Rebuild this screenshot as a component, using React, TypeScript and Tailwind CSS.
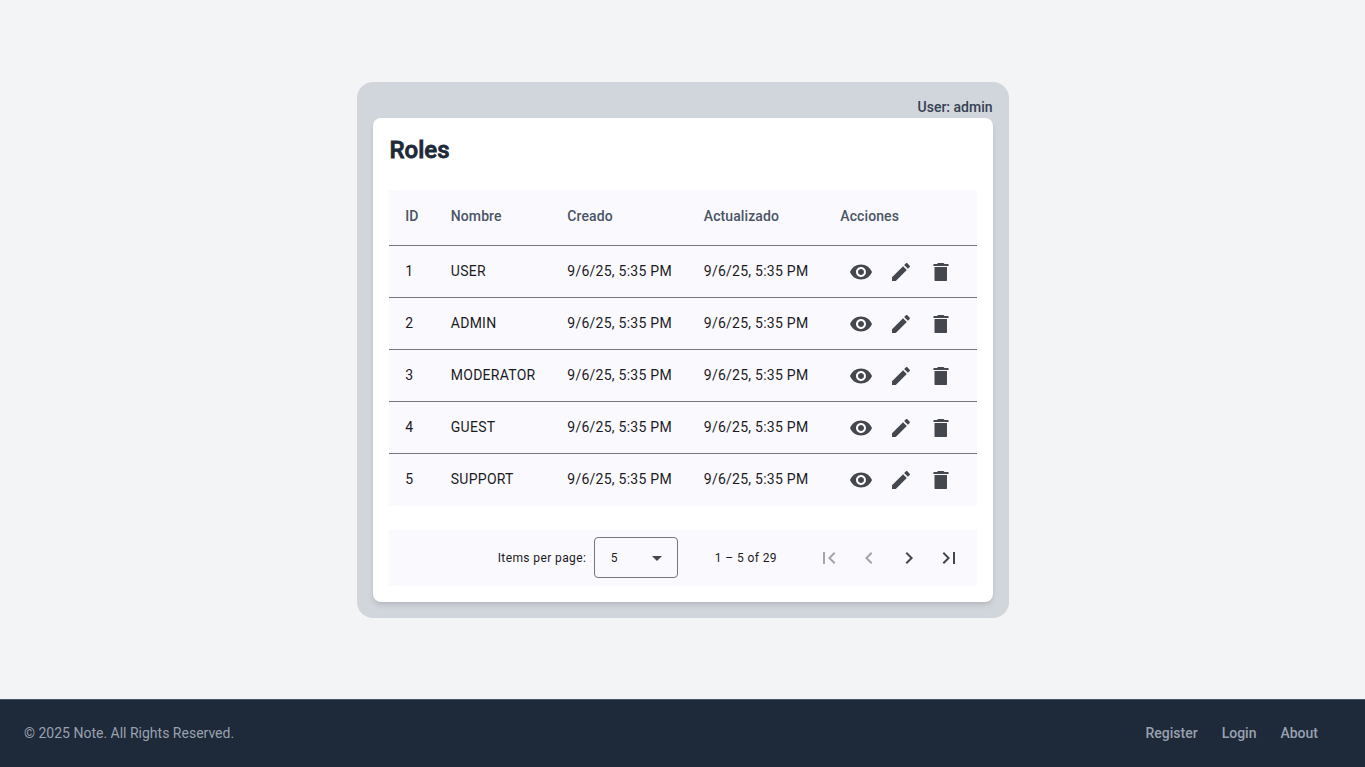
import React from "react";

const ICONS = {
  view: "M12 4.5C7 4.5 2.73 7.61 1 12c1.73 4.39 6 7.5 11 7.5s9.27-3.11 11-7.5c-1.73-4.39-6-7.5-11-7.5zM12 17c-2.76 0-5-2.24-5-5s2.24-5 5-5 5 2.24 5 5-2.24 5-5 5zm0-8c-1.66 0-3 1.34-3 3s1.34 3 3 3 3-1.34 3-3-1.34-3-3-3z",
  edit: "M3 17.25V21h3.75L17.81 9.94l-3.75-3.75L3 17.25zM20.71 7.04c.39-.39.39-1.02 0-1.41l-2.34-2.34c-.39-.39-1.02-.39-1.41 0l-1.83 1.83 3.75 3.75 1.83-1.83z",
  remove: "M5.5 20c0 .6.4 1 1 1h10.5c.6 0 1-.4 1-1V7H5.5V20zM19.5 4h-4l-1-1h-5.500l-1 1H4.500V6h15V4z",
  first: "M18.41 16.59L13.82 12l4.59-4.59L17 6l-6 6 6 6zM6 6h2v12H6z",
  previous: "M15.41 7.41L14 6l-6 6 6 6 1.41-1.41L10.83 12z",
  next: "M10 6L8.59 7.41 13.17 12l-4.58 4.59L10 18l6-6z",
  last: "M5.59 7.41L10.18 12l-4.59 4.59L7 18l6-6-6-6zM16 6h2v12h-2z",
};

function IconButton({ icon, label, disabled = false }: {
  icon: keyof typeof ICONS;
  label: string;
  disabled?: boolean;
}) {
  return (
    <button
      type="button"
      aria-label={label}
      disabled={disabled}
      className="flex size-10 items-center justify-center rounded-full text-[#44474e] disabled:text-[#1a1b1f]/38"
    >
      <svg viewBox="0 0 24 24" className="size-6" fill="currentColor">
        <path d={ICONS[icon]} />
      </svg>
    </button>
  );
}

const roles = ["USER", "ADMIN", "MODERATOR", "GUEST", "SUPPORT"].map((name, i) => ({
  id: i + 1,
  name,
  created: "9/6/25, 5:35 PM",
  updated: "9/6/25, 5:35 PM",
}));

function RolesTable() {
  return (
    <table className="mb-6 w-full table-fixed border-separate border-spacing-0 bg-[#faf9fd] text-left text-sm">
      <colgroup>
        <col className="w-[45.5px]" />
        <col className="w-[116.5px]" />
        <col className="w-[136.5px]" />
        <col className="w-[136.5px]" />
        <col />
      </colgroup>
      <thead>
        <tr className="h-14">
          {["ID", "Nombre", "Creado", "Actualizado", "Acciones"].map((h) => (
            <th key={h} className="border-b border-[#74777f] pr-3 pb-[2px] pl-[16.8px] font-medium tracking-[0.096px] text-[#4a5565]">
              {h}
            </th>
          ))}
        </tr>
      </thead>
      <tbody className="tracking-[0.256px] text-[#1a1b1f] [&_td]:border-b [&_td]:border-[#74777f] [&>tr:last-child>td]:border-transparent">
        {roles.map((r) => (
          <tr key={r.id} className="h-13">
            <td className="py-0 pl-[16.8px]">{r.id}</td>
            <td className="py-0 pl-[16.8px]">{r.name}</td>
            <td className="py-0 pl-[16.8px] whitespace-nowrap">{r.created}</td>
            <td className="py-0 pl-[16.8px] whitespace-nowrap">{r.updated}</td>
            <td className="py-0 pl-[17.5px]">
              <div className="flex pt-px">
                <IconButton icon="view" label="Ver" />
                <IconButton icon="edit" label="Editar" />
                <IconButton icon="remove" label="Eliminar" />
              </div>
            </td>
          </tr>
        ))}
      </tbody>
    </table>
  );
}

function Paginator() {
  return (
    <div className="flex h-14 items-center justify-end bg-[#faf9fd] pr-2 text-xs tracking-[0.4px] text-[#1a1b1f]">
      <span>Items per page:</span>
      <button
        type="button"
        className="mx-2 flex h-[41px] w-[84px] items-center justify-between rounded-sm border border-[#74777f] pr-[15px] pl-[15.5px]"
      >
        <span>5</span>
        <svg viewBox="0 0 10 5" className="mt-px h-[5px] w-2.5" fill="#44474e">
          <path d="M0 0h10L5 5z" />
        </svg>
      </button>
      <span className="mr-[23.5px] ml-[28.5px]">1 – 5 of 29</span>
      <div className="ml-2 flex">
        <IconButton icon="first" label="First page" disabled />
        <IconButton icon="previous" label="Previous page" disabled />
        <IconButton icon="next" label="Next page" />
        <IconButton icon="last" label="Last page" />
      </div>
    </div>
  );
}

export default function App() {
  return (
    <div className="flex h-screen flex-col bg-gray-100 font-['Roboto',sans-serif]">
      <main className="flex flex-1 items-center justify-center">
        <section className="w-[652px] rounded-2xl bg-gray-300 px-4 pt-[15px] pb-4">
          <p className="pb-px text-right text-sm font-medium text-gray-700">User: admin</p>
          <div className="rounded-lg bg-white p-4 shadow-md">
            <h1 className="mb-6 pl-px text-2xl font-medium text-gray-800 [-webkit-text-stroke:0.8px_currentColor]">Roles</h1>
            <RolesTable />
            <Paginator />
          </div>
        </section>
      </main>
      <footer className="flex h-[68px] items-center justify-between border-t border-gray-600 bg-gray-800 pr-[47px] pb-[2px] pl-6 text-sm text-gray-400">
        <span>© 2025 Note. All Rights Reserved.</span>
        <nav className="flex gap-6 font-medium">
          <a href="#register">Register</a>
          <a href="#login">Login</a>
          <a href="#about">About</a>
        </nav>
      </footer>
    </div>
  );
}
